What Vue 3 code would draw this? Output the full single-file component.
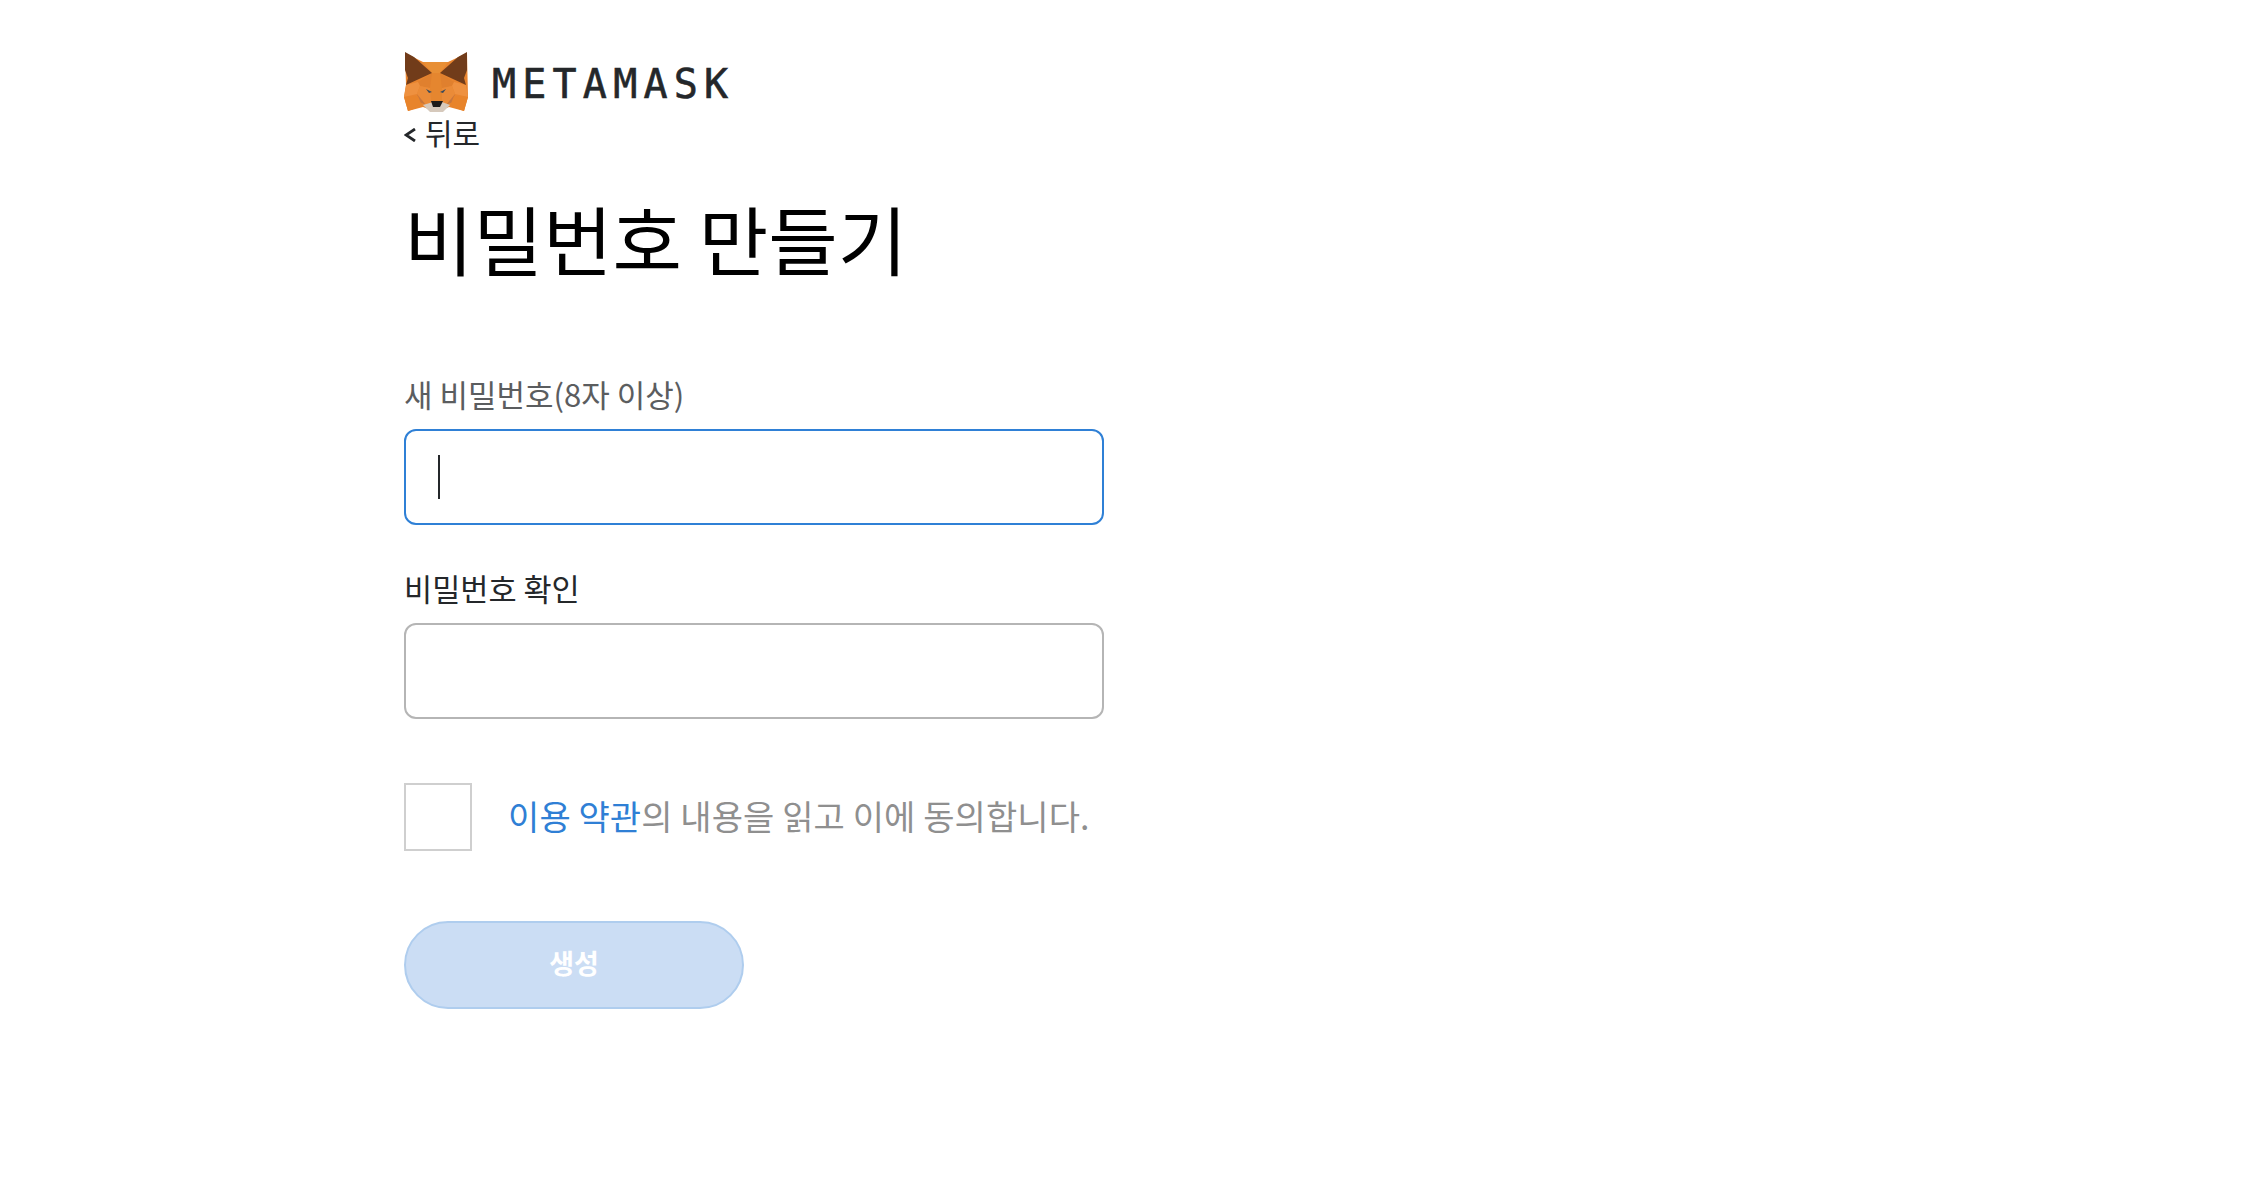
<script setup>
const brand = 'METAMASK'
</script>

<template>
  <main class="page">
    <header class="brand">
      <svg class="fox" viewBox="0 0 64 61" aria-hidden="true">
        <polygon points="1,1 19,10 44,10 63,1 64,45 60,59 45,55 33,60 19,55 4,59 0,45 2,33" fill="#e8842e" />
        <polygon points="19,10 28,21 36,21 44,10" fill="#e88f35" />
        <polygon points="28,21 36,21 38,36 26,36" fill="#e5862f" />
        <polygon points="28,21 14,30 16,34 26,36" fill="#e0802e" />
        <polygon points="36,21 50,30 48,34 38,36" fill="#e0802e" />
        <polygon points="2,33 14,30 16,34 13,42 0,45" fill="#ee9140" />
        <polygon points="62,33 50,30 48,34 51,42 64,45" fill="#ee9140" />
        <polygon points="16,34 26,36 29,50 19,53 13,42" fill="#ea8b38" />
        <polygon points="48,34 38,36 35,50 45,53 51,42" fill="#ea8b38" />
        <polygon points="26,36 38,36 38,50 27,50" fill="#e5862f" />
        <polygon points="13,42 22,53 15,50" fill="#c8763c" />
        <polygon points="51,42 42,53 49,50" fill="#c8763c" />
        <polygon points="0,45 14,44 18,54 4,59" fill="#e8842b" />
        <polygon points="64,45 50,44 46,54 60,59" fill="#e8842b" />
        <polygon points="1,0 10,5 28,21 2,33 4,26 1,18" fill="#713c1a" />
        <polygon points="63,0 54,5 36,21 62,33 60,26 63,18" fill="#713c1a" />
        <polygon points="19,53 29,50 38,50 46,53 39,60 26,60" fill="#d6c9bc" />
        <polygon points="27,49 39,49 36,55 29,55" fill="#1d1b1a" />
        <polygon points="22,37 28,40 25,41" fill="#3a4a5c" />
        <polygon points="42,37 36,40 39,41" fill="#3a4a5c" />
      </svg>
      <span class="wordmark">{{ brand }}</span>
    </header>

    <a class="back">
      <svg class="chevron" viewBox="0 0 12 14" aria-hidden="true">
        <path d="M11 1 L2 7 L11 13" fill="none" stroke="#24272a" stroke-width="2.8" />
      </svg>
      <span>뒤로</span>
    </a>

    <h1 class="title">비밀번호 만들기</h1>

    <form class="form">
      <label class="field">
        <span class="label muted">새 비밀번호(8자 이상)</span>
        <span class="input focused"><i class="caret"></i></span>
      </label>
      <label class="field second">
        <span class="label narrow">비밀번호 확인</span>
        <span class="input"></span>
      </label>

      <div class="terms">
        <span class="box"></span>
        <p class="terms-text"><span class="link">이용 약관</span>의 내용을 읽고 이에 동의합니다.</p>
      </div>

      <button type="button" class="submit">생성</button>
    </form>
  </main>
</template>

<style>
html, body { background: #fff; }
</style>

<style scoped>
.page {
  box-sizing: border-box;
  width: 2262px;
  height: 1182px;
  overflow: hidden;
  padding: 52px 0 0 404px;
  background: #fff;
  font-family: "Noto Sans CJK KR", "Noto Sans", sans-serif;
  color: #24272a;
}
.brand {
  display: flex;
  align-items: center;
  height: 60px;
}
.fox {
  width: 64px;
  height: 61px;
  flex: none;
}
.wordmark {
  margin-left: 24px;
  padding-top: 4px;
  font-family: "DejaVu Sans Mono", monospace;
  font-weight: 400;
  font-size: 40px;
  line-height: 60px;
  letter-spacing: 6.2px;
  -webkit-text-stroke: 0.6px #24272a;
  color: #24272a;
}
.back {
  display: flex;
  align-items: center;
  gap: 9px;
  font-size: 30px;
  line-height: 40px;
  color: #24272a;
}
.chevron {
  width: 12px;
  height: 14px;
  margin-top: 6px;
  flex: none;
}
.title {
  margin: 33px 0 0;
  font-size: 75.5px;
  line-height: 104px;
  font-weight: 400;
  color: #000;
}
.form {
  display: flex;
  flex-direction: column;
  margin-top: 83px;
  width: 700px;
}
.field {
  display: flex;
  flex-direction: column;
}
.second { margin-top: 41px; }
.label {
  font-size: 31px;
  line-height: 44px;
  margin-bottom: 13px;
  color: #24272a;
}
.narrow { font-size: 30.6px; }
.muted { color: #5b5d5f; }
.input {
  box-sizing: border-box;
  display: flex;
  align-items: center;
  height: 96px;
  padding-left: 32px;
  border: 2px solid #b5b5b5;
  border-radius: 12px;
  background: #fff;
}
.focused { border-color: #2f80d6; }
.caret {
  display: block;
  width: 2px;
  height: 44px;
  background: #24272a;
}
.terms {
  display: flex;
  align-items: center;
  margin-top: 64px;
}
.box {
  box-sizing: border-box;
  flex: none;
  width: 68px;
  height: 68px;
  border: 2px solid #cfcfcf;
}
.terms-text {
  margin: -2px 0 0 36px;
  font-size: 34px;
  line-height: 48px;
  white-space: nowrap;
  color: #8f8f8f;
  letter-spacing: 0.1px;
}
.link { color: #2f7fd5; }
.submit {
  box-sizing: border-box;
  width: 340px;
  height: 88px;
  margin-top: 70px;
  padding: 0 0 5px;
  border: 2px solid #afcdee;
  border-radius: 44px;
  background: #cbddf4;
  color: #fff;
  font-family: inherit;
  font-size: 27px;
  font-weight: 700;
}
</style>
